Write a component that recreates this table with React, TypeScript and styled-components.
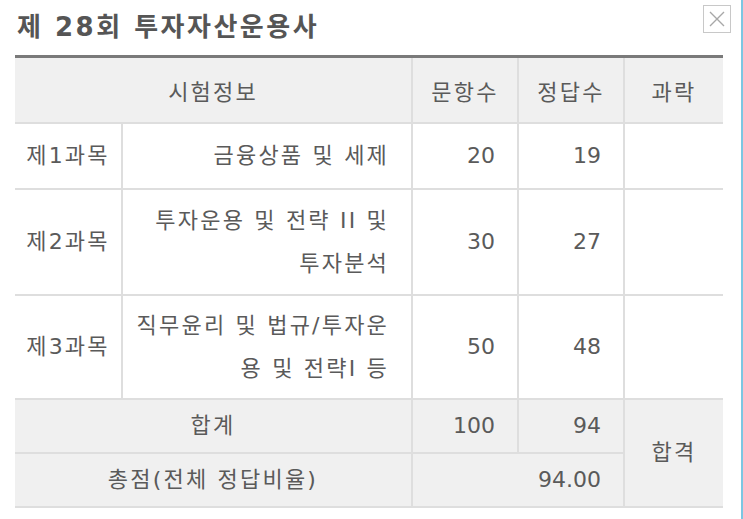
import * as React from 'react';
import styled, { createGlobalStyle } from 'styled-components';

const GlobalStyle = createGlobalStyle`
    html, body {
        margin: 0;
        padding: 0;
        background: #fff;
    }
    body {
        font-family: "DejaVu Sans", "Noto Sans CJK KR", sans-serif;
        color: #5a5a5a;
    }
`;

const Page = styled.div`
    box-sizing: border-box;
    width: 743px;
    min-height: 519px;
    padding: 5px 20px 0 15px;
    border-right: 2px solid #7cc6e2;
`;

const TitleBar = styled.div`
    display: flex;
    align-items: flex-start;
    justify-content: space-between;
    height: 50px;
    padding-left: 2px;
`;

const Title = styled.h1`
    margin: 6px 0 0;
    font-size: 26px;
    line-height: 32px;
    font-weight: bold;
    color: #555;
    letter-spacing: 2.5px;
`;

const CloseButton = styled.button`
    box-sizing: border-box;
    width: 28px;
    height: 28px;
    margin-right: -10px;
    padding: 0;
    border: 1px solid #c8c8c8;
    background: #fff;
    display: flex;
    align-items: center;
    justify-content: center;
    cursor: pointer;
`;

const Table = styled.table`
    width: 708px;
    border-collapse: collapse;
    table-layout: fixed;
    border-top: 3px solid #7a7a7a;
`;

interface RowProps {
    h: number;
    shade?: boolean;
}

const Row = styled.tr<RowProps>`
    height: ${props => props.h}px;
    background: ${props => (props.shade ? '#f0f0f0' : '#fff')};
`;

interface CellProps {
    align?: 'center' | 'right';
    num?: boolean;
}

const Cell = styled.td<CellProps>`
    border: 2px solid #dedede;
    padding: ${props => (props.align === 'right' ? '0 22px 0 0' : '0 2px')};
    font-size: 22px;
    line-height: 43px;
    letter-spacing: ${props => (props.num ? '0' : '2.2px')};
    white-space: nowrap;
    vertical-align: middle;
    text-align: ${props => props.align || 'center'};
    color: #5a5a5a;
    &:first-child {
        border-left: none;
    }
    &:last-child {
        border-right: none;
    }
`;

const HeadCell = styled.th`
    border: 2px solid #dedede;
    border-top: none;
    padding: 0 2px;
    font-size: 22px;
    font-weight: normal;
    letter-spacing: 2.2px;
    color: #5a5a5a;
    text-align: center;
    &:first-child {
        border-left: none;
    }
    &:last-child {
        border-right: none;
    }
`;

const subjects = [
    { name: '제1과목', title: ['금융상품 및 세제'], total: 20, correct: 19, h: 66 },
    { name: '제2과목', title: ['투자운용 및 전략 II 및', '투자분석'], total: 30, correct: 27, h: 106 },
    { name: '제3과목', title: ['직무윤리 및 법규/투자운', '용 및 전략I 등'], total: 50, correct: 48, h: 104 },
];

const CloseIcon = () => (
    <svg width="18" height="18" viewBox="0 0 18 18">
        <path d="M2 2 L16 16 M16 2 L2 16" stroke="#a8a8a8" strokeWidth="1.4" fill="none"/>
    </svg>
);

export default function App() {
    return (
        <Page>
            <GlobalStyle/>
            <TitleBar>
                <Title>제 28회 투자자산운용사</Title>
                <CloseButton aria-label="닫기"><CloseIcon/></CloseButton>
            </TitleBar>
            <Table>
                <colgroup>
                    <col style={{ width: 107 }}/>
                    <col style={{ width: 290 }}/>
                    <col style={{ width: 106 }}/>
                    <col style={{ width: 106 }}/>
                    <col style={{ width: 99 }}/>
                </colgroup>
                <thead>
                    <Row h={66} shade>
                        <HeadCell colSpan={2}>시험정보</HeadCell>
                        <HeadCell>문항수</HeadCell>
                        <HeadCell>정답수</HeadCell>
                        <HeadCell>과락</HeadCell>
                    </Row>
                </thead>
                <tbody>
                    {subjects.map(s => (
                        <Row key={s.name} h={s.h}>
                            <Cell>{s.name}</Cell>
                            <Cell align="right">
                                {s.title.map((line, i) => (
                                    <React.Fragment key={i}>{i > 0 && <br/>}{line}</React.Fragment>
                                ))}
                            </Cell>
                            <Cell align="right" num>{s.total}</Cell>
                            <Cell align="right" num>{s.correct}</Cell>
                            <Cell/>
                        </Row>
                    ))}
                    <Row h={54} shade>
                        <Cell colSpan={2}>합계</Cell>
                        <Cell align="right" num>100</Cell>
                        <Cell align="right" num>94</Cell>
                        <Cell rowSpan={2}>합격</Cell>
                    </Row>
                    <Row h={54} shade>
                        <Cell colSpan={2}>총점(전체 정답비율)</Cell>
                        <Cell align="right" num colSpan={2}>94.00</Cell>
                    </Row>
                </tbody>
            </Table>
        </Page>
    );
}
